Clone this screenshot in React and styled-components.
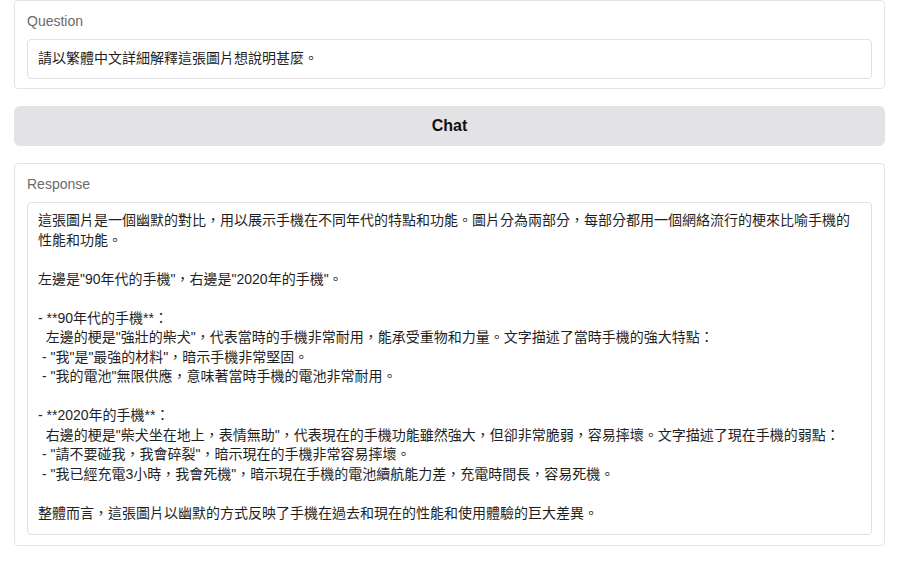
import styled, { createGlobalStyle } from 'styled-components';

const question = '請以繁體中文詳細解釋這張圖片想說明甚麼。';

const response = `這張圖片是一個幽默的對比，用以展示手機在不同年代的特點和功能。圖片分為兩部分，每部分都用一個網絡流行的梗來比喻手機的
性能和功能。

左邊是"90年代的手機"，右邊是"2020年的手機"。

- **90年代的手機**：
  左邊的梗是"強壯的柴犬"，代表當時的手機非常耐用，能承受重物和力量。文字描述了當時手機的強大特點：
 - "我"是"最強的材料"，暗示手機非常堅固。
 - "我的電池"無限供應，意味著當時手機的電池非常耐用。

- **2020年的手機**：
  右邊的梗是"柴犬坐在地上，表情無助"，代表現在的手機功能雖然強大，但卻非常脆弱，容易摔壞。文字描述了現在手機的弱點：
 - "請不要碰我，我會碎裂"，暗示現在的手機非常容易摔壞。
 - "我已經充電3小時，我會死機"，暗示現在手機的電池續航能力差，充電時間長，容易死機。

整體而言，這張圖片以幽默的方式反映了手機在過去和現在的性能和使用體驗的巨大差異。`;

const GlobalStyle = createGlobalStyle`
  body {
    margin: 0;
    background: #ffffff;
    font-family: "Liberation Sans", "Noto Sans CJK TC", sans-serif;
    color: #1f1f1f;
  }
`;

const Page = styled.div`
  display: flex;
  flex-direction: column;
  gap: 17px;
  padding: 0 17px 0 14px;
`;

const Card = styled.section`
  display: flex;
  flex-direction: column;
  gap: 10px;
  padding: 12px 12px ${(p) => p.$bottom}px;
  border: 1px solid #e4e4e6;
  border-radius: 4px;
  background: #fff;
`;

const Label = styled.div`
  font-size: 14px;
  line-height: 16px;
  color: #6b6b6b;
`;

const Field = styled.div`
  padding: ${(p) => (p.$multi ? '8px 10px 11px' : '0 10px')};
  height: ${(p) => (p.$multi ? 'auto' : '40px')};
  display: flex;
  align-items: center;
  border: 1px solid #e1e1e3;
  border-radius: 4px;
  font-family: "Liberation Sans", "Noto Sans CJK TC", sans-serif;
  font-size: 14px;
  line-height: 19.5px;
  color: #1f1f1f;
  white-space: pre-wrap;
  box-sizing: border-box;
`;

const ChatButton = styled.button`
  height: 40px;
  padding: 0;
  border: none;
  border-radius: 6px;
  background: #e3e3e5;
  font-family: "Liberation Sans", "Noto Sans", sans-serif;
  font-size: 16px;
  font-weight: 700;
  color: #111;
  cursor: pointer;
`;

export default function App() {
  return (
    <>
      <GlobalStyle />
      <Page>
        <Card $bottom={9}>
          <Label>Question</Label>
          <Field>{question}</Field>
        </Card>
        <ChatButton>Chat</ChatButton>
        <Card $bottom={10}>
          <Label>Response</Label>
          <Field $multi>{response}</Field>
        </Card>
      </Page>
    </>
  );
}
